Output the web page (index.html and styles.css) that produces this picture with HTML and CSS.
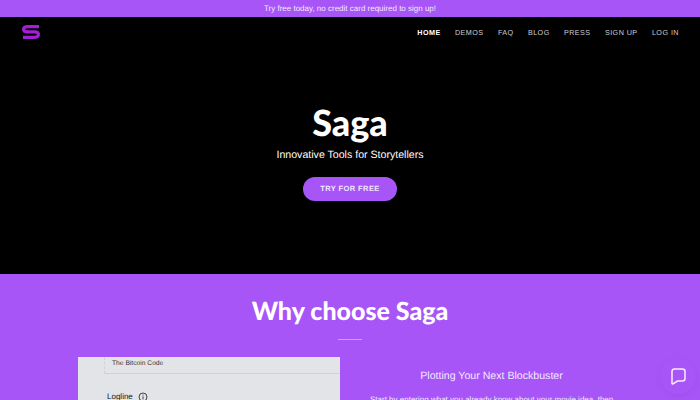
FILE: index.html
```html
<!DOCTYPE html>
<html lang="en">
<head>
    <meta charset="UTF-8">
    <meta name="viewport" content="width=device-width, initial-scale=1.0">
    <title>Saga</title>
    <link rel="stylesheet" href="styles.css">
</head>
<body>
    <div class="promo">Try free today, no credit card required to sign up!</div>

    <section class="hero">
        <nav class="nav">
            <a class="logo" href="#" aria-label="Saga">
                <svg width="18" height="14" viewBox="0 0 18 14">
                    <path d="M17 1.6H6Q1.6 1.6 1.6 4.2Q1.6 6.8 5.5 6.8H12.5Q16.4 6.8 16.4 9.6Q16.4 12.4 12 12.4H1" fill="none" stroke="#a21fd6" stroke-width="3.2"/>
                </svg>
            </a>
            <div class="nav-links">
                <a class="active" href="#">HOME</a>
                <a href="#">DEMOS</a>
                <a href="#">FAQ</a>
                <a href="#">BLOG</a>
                <a href="#">PRESS</a>
                <a href="#">SIGN UP</a>
                <a href="#">LOG IN</a>
            </div>
        </nav>
        <div class="hero-text">
            <h1>Saga</h1>
            <p>Innovative Tools for Storytellers</p>
            <a class="cta" href="#">TRY FOR FREE</a>
        </div>
    </section>

    <section class="why">
        <h2>Why choose Saga</h2>
        <div class="divider"></div>
        <div class="why-row">
            <div class="shot">
                <div class="shot-field">The Bitcoin Code</div>
                <div class="shot-label">Logline
                    <svg width="10" height="10" viewBox="0 0 10 10">
                        <circle cx="5" cy="5" r="4" fill="none" stroke="#444" stroke-width="1"/>
                        <path d="M5 4.4V7.4M5 2.6V3.6" stroke="#444" stroke-width="1"/>
                    </svg>
                </div>
            </div>
            <div class="why-text">
                <h3>Plotting Your Next Blockbuster</h3>
                <p>Start by entering what you already know about your movie idea, then</p>
            </div>
        </div>
    </section>

    <button class="chat" aria-label="Chat">
        <svg width="15" height="17" viewBox="0 0 15 17">
            <path d="M3.5 1H11.5Q14 1 14 3.5V10.5Q14 13 11.5 13H6.5L2 15.8Q1 16.2 1 15.2V3.5Q1 1 3.5 1Z" fill="none" stroke="#fbeaff" stroke-width="1.5" stroke-linejoin="round"/>
        </svg>
    </button>
</body>
</html>
```

FILE: styles.css
```css
html, body {
    height: 400px;
    overflow: hidden;
}
body {
    margin: 0;
    font-family: "Liberation Sans", Arial, sans-serif;
    text-rendering: geometricPrecision;
    background-color: #a855f7;
    color: #fff;
}
a {
    color: inherit;
    text-decoration: none;
}
.promo {
    height: 15px;
    margin-top: 1px;
    border-bottom: 1px solid #a855f7;
    background-color: #a855f7;
    font-size: 8px;
    line-height: 15px;
    text-align: center;
    color: #f3e8ff;
}
.hero {
    height: 257px;
    background-color: #000;
}
.nav {
    display: flex;
    justify-content: space-between;
    padding: 8px 21px 0 22px;
}
.logo {
    display: block;
    height: 14px;
}
.nav-links {
    display: flex;
    gap: 14.3px;
    padding-top: 3px;
    font-size: 7.2px;
    letter-spacing: 0.45px;
    color: #cfcfcf;
}
.nav-links .active {
    font-weight: bold;
    color: #fff;
}
.hero-text {
    padding-top: 61px;
    text-align: center;
}
.hero-text h1 {
    margin: 0;
    font-family: Lato, sans-serif;
    font-size: 36px;
    font-weight: 900;
    line-height: 44px;
}
.hero-text p {
    margin: 4px 0 15px;
    font-size: 10.6px;
    line-height: 14px;
}
.cta {
    display: inline-block;
    width: 94px;
    height: 24px;
    border-radius: 12px;
    background-color: #a855f7;
    font-size: 7.5px;
    font-weight: bold;
    letter-spacing: 0.4px;
    line-height: 24px;
    color: #f3e8ff;
}
.why {
    padding-top: 21px;
    text-align: center;
}
.why h2 {
    margin: 0;
    font-family: Lato, sans-serif;
    font-size: 25px;
    font-weight: 900;
    line-height: 32px;
}
.divider {
    width: 24px;
    height: 1px;
    margin: 12px auto 17px;
    background-color: #c9a0f9;
}
.why-row {
    display: flex;
    gap: 30px;
    padding-left: 78px;
}
.shot {
    width: 262px;
    height: 60px;
    box-sizing: border-box;
    padding-left: 26px;
    background-color: #e2e4e8;
    text-align: left;
    color: #333;
}
.shot-field {
    height: 16px;
    padding-left: 7px;
    border-left: 1px dashed #cfd2d6;
    border-bottom: 1px solid #cfd2d6;
    font-size: 6.7px;
    line-height: 14px;
}
.shot-label {
    display: flex;
    align-items: center;
    gap: 5px;
    margin: 17px 0 0 3px;
    font-size: 8px;
    line-height: 12px;
    color: #111;
}
.why-text {
    width: 243px;
}
.why-text h3 {
    margin: 12px 0 11px;
    font-size: 10.6px;
    font-weight: normal;
    line-height: 14px;
    color: #f3e8ff;
}
.why-text p {
    margin: 0;
    font-size: 8px;
    line-height: 12px;
    white-space: nowrap;
    color: #f3e8ff;
}
.chat {
    position: fixed;
    right: 4px;
    bottom: 6px;
    width: 36px;
    height: 36px;
    padding: 0;
    border: none;
    border-radius: 50%;
    background-color: #a855f7;
    box-shadow: 0 2px 6px rgba(60, 20, 110, 0.08);
    display: flex;
    align-items: center;
    justify-content: center;
}
```
